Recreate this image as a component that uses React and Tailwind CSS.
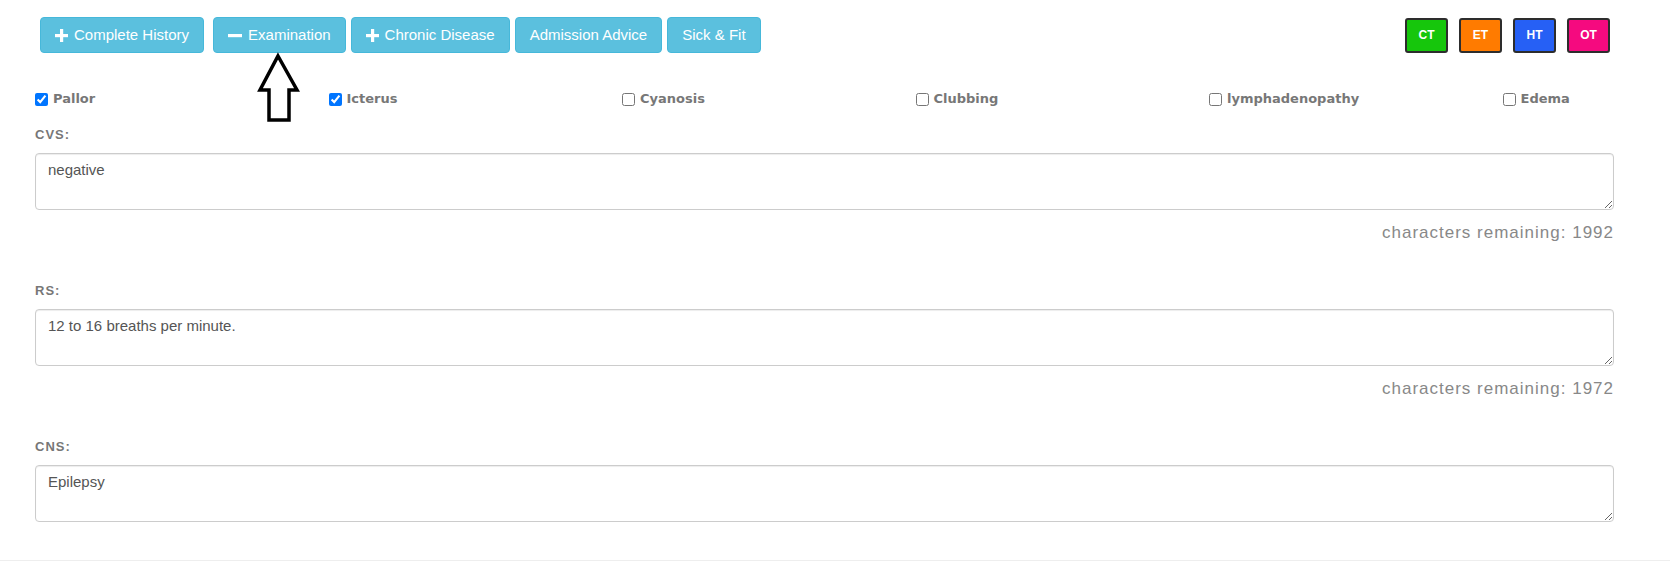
import { useState } from 'react';

const PlusIcon = () => (
  <svg width="13" height="13" viewBox="0 0 13 13" className="shrink-0">
    <rect x="5" y="0" width="3.2" height="13" fill="white" />
    <rect x="0" y="5" width="13" height="3.2" fill="white" />
  </svg>
);

const MinusIcon = () => (
  <svg width="14" height="13" viewBox="0 0 14 13" className="shrink-0">
    <rect x="0" y="5" width="14" height="3.2" fill="white" />
  </svg>
);

const ActionButton = ({ icon, children, className = '' }) => (
  <button className={`h-[36px] px-[14px] flex items-center gap-[6px] rounded-[4px] bg-[#5bc0de] border border-[#46b8da] text-white text-[15px] ${className}`}>
    {icon}
    <span>{children}</span>
  </button>
);

const TagButton = ({ label, bg }) => (
  <button className={`w-[43px] h-[35px] rounded-[3px] border-2 border-[#2d2d2d] text-white text-[12px] font-bold ${bg}`}>
    {label}
  </button>
);

const signs = [
  { name: 'Pallor', checked: true },
  { name: 'Icterus', checked: true },
  { name: 'Cyanosis', checked: false },
  { name: 'Clubbing', checked: false },
  { name: 'lymphadenopathy', checked: false },
  { name: 'Edema', checked: false },
];

const NoteField = ({ label, value, showCount, first }) => {
  const [text, setText] = useState(value);
  return (
    <div className={first ? 'mt-[18px]' : 'mt-[40px]'}>
      <label className="block text-[13px] leading-[16px] font-bold tracking-[1px] text-[#777]">{label}</label>
      <textarea
        value={text}
        onChange={(e) => setText(e.target.value)}
        className="mt-[10px] block w-full h-[57px] px-[12px] py-[6px] text-[15px] leading-[20px] text-[#555] border border-[#ccc] rounded-[4px] shadow-[inset_0_1px_1px_rgba(0,0,0,0.075)] outline-none"
      />
      {showCount && (
        <p className="mt-[13px] text-right text-[17px] leading-[20px] tracking-[1px] text-[#888]">
          characters remaining: {2000 - text.length}
        </p>
      )}
    </div>
  );
};

export default function App() {
  return (
    <div className="relative min-h-[564px] bg-white font-['Liberation_Sans',Arial,sans-serif]">
      <div className="pt-[17px] pl-[35px] pr-[56px]">
        {/* top buttons */}
        <div className="flex items-center justify-between pl-[5px] pr-[4px]">
          <div className="flex gap-[5px]">
            <ActionButton icon={<PlusIcon />}>Complete History</ActionButton>
            <ActionButton icon={<MinusIcon />} className="ml-[4px]">Examination</ActionButton>
            <ActionButton icon={<PlusIcon />}>Chronic Disease</ActionButton>
            <ActionButton>Admission Advice</ActionButton>
            <ActionButton>Sick &amp; Fit</ActionButton>
          </div>
          <div className="flex gap-[11px]">
            <TagButton label="CT" bg="bg-[#16c60c]" />
            <TagButton label="ET" bg="bg-[#ff7b00]" />
            <TagButton label="HT" bg="bg-[#2660f5]" />
            <TagButton label="OT" bg="bg-[#f50a7f]" />
          </div>
        </div>

        {/* examination signs */}
        <div className="mt-[36px] grid grid-cols-[repeat(5,293.5px)_auto] h-[20px] items-center">
          {signs.map((s) => (
            <label key={s.name} className="flex items-center gap-[5px] font-['DejaVu_Sans',Verdana,sans-serif] text-[13px] font-bold text-[#777]">
              <input type="checkbox" defaultChecked={s.checked} className="m-0 w-[13px] h-[13px]" />
              <span>{s.name}</span>
            </label>
          ))}
        </div>

        <NoteField first label="CVS:" value="negative" showCount />
        <NoteField label="RS:" value="12 to 16 breaths per minute." showCount />
        <NoteField label="CNS:" value="Epilepsy" />
      </div>

      <div className="mt-[38px] border-t border-[#eee]" />

      {/* pointer arrow */}
      <svg width="48" height="72" viewBox="0 0 48 72" className="absolute left-[256px] top-[52px]">
        <polygon
          points="22,4 41,38 33,38 33,68 13,68 13,38 4,38"
          fill="white"
          stroke="black"
          strokeWidth="3.5"
          strokeLinejoin="miter"
        />
      </svg>
    </div>
  );
}
